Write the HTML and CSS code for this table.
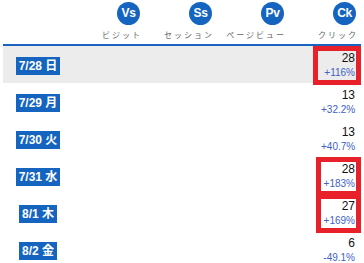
FILE: index.html
```html
<!DOCTYPE html>
<html lang="ja">
<head>
<meta charset="utf-8">
<link rel="stylesheet" href="styles.css">
</head>
<body>
<div class="board">
  <div class="head">
    <div class="hcell"></div>
    <div class="hcell"><span class="dot">Vs</span><span class="lbl">ビジット</span></div>
    <div class="hcell"><span class="dot">Ss</span><span class="lbl">セッション</span></div>
    <div class="hcell"><span class="dot">Pv</span><span class="lbl">ページビュー</span></div>
    <div class="hcell"><span class="dot">Ck</span><span class="lbl">クリック</span></div>
  </div>
  <div class="row today">
    <div class="date"><span class="badge">7/28 日</span></div>
    <div class="c"></div><div class="c"></div><div class="c"></div>
    <div class="c v"><div class="val hot wide"><div class="num">28</div><div class="pct">+116%</div></div></div>
  </div>
  <div class="row">
    <div class="date"><span class="badge">7/29 月</span></div>
    <div class="c"></div><div class="c"></div><div class="c"></div>
    <div class="c v"><div class="val"><div class="num">13</div><div class="pct">+32.2%</div></div></div>
  </div>
  <div class="row">
    <div class="date"><span class="badge">7/30 火</span></div>
    <div class="c"></div><div class="c"></div><div class="c"></div>
    <div class="c v"><div class="val"><div class="num">13</div><div class="pct">+40.7%</div></div></div>
  </div>
  <div class="row">
    <div class="date"><span class="badge">7/31 水</span></div>
    <div class="c"></div><div class="c"></div><div class="c"></div>
    <div class="c v"><div class="val hot"><div class="num">28</div><div class="pct">+183%</div></div></div>
  </div>
  <div class="row">
    <div class="date"><span class="badge">8/1 木</span></div>
    <div class="c"></div><div class="c"></div><div class="c"></div>
    <div class="c v"><div class="val hot"><div class="num">27</div><div class="pct">+169%</div></div></div>
  </div>
  <div class="row">
    <div class="date"><span class="badge">8/2 金</span></div>
    <div class="c"></div><div class="c"></div><div class="c"></div>
    <div class="c v"><div class="val"><div class="num">6</div><div class="pct">-49.1%</div></div></div>
  </div>
</div>
</body>
</html>
```

FILE: styles.css
```css
html, body {
  margin: 0;
  padding: 0;
  background: #ffffff;
}
body {
  font-family: "Liberation Sans", Arial, "Noto Sans CJK JP", sans-serif;
  color: #111;
}
.board {
  margin: 0 3px;
  width: 358px;
}
.head {
  display: grid;
  grid-template-columns: 70px repeat(4, 72px);
  height: 44px;
  border-bottom: 2px solid #1a63c4;
}
.hcell {
  display: flex;
  flex-direction: column;
  align-items: flex-end;
  padding-right: 5px;
  padding-top: 2px;
}
.dot {
  width: 23px;
  height: 23px;
  border-radius: 50%;
  background: #1565c0;
  color: #fff;
  font-weight: bold;
  font-size: 12px;
  line-height: 23px;
  text-align: center;
  letter-spacing: -0.3px;
}
.lbl {
  margin-top: 4px;
  font-family: "Noto Sans CJK JP", sans-serif;
  font-size: 8px;
  line-height: 12px;
  letter-spacing: 2px;
  margin-right: -2px;
  color: #666;
}
.row {
  display: grid;
  grid-template-columns: 70px repeat(4, 72px);
  height: 37px;
}
.row.today {
  background: #ececec;
}
.date {
  display: flex;
  justify-content: center;
  align-items: flex-start;
  padding-top: 11px;
}
.badge {
  background: #1565c0;
  color: #fff;
  font-weight: bold;
  font-size: 12px;
  line-height: 18px;
  height: 18px;
  padding: 0 2.5px;
  font-family: "Liberation Sans", Arial, "Noto Sans CJK JP", sans-serif;
}
.c.v {
  display: flex;
  justify-content: flex-end;
  align-items: flex-start;
}
.val {
  box-sizing: border-box;
  width: 45px;
  height: 39px;
  border: 5px solid transparent;
  padding-right: 1px;
  text-align: right;
  position: relative;
  z-index: 1;
}
.val.wide {
  width: 48px;
}
.val.hot {
  border-color: #e8202a;
}
.num {
  font-size: 12px;
  line-height: 15px;
  color: #111;
}
.pct {
  font-size: 10px;
  line-height: 14px;
  color: #3f5fc6;
}
```
